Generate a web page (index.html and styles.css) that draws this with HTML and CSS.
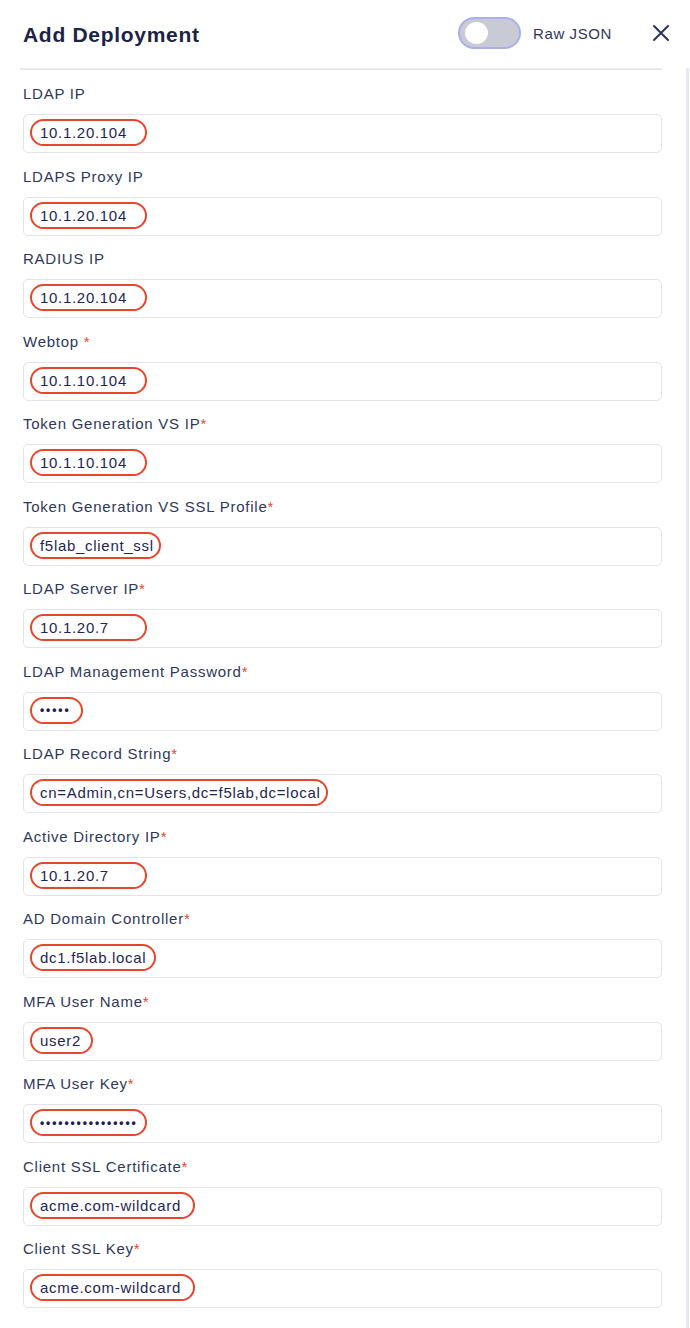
FILE: index.html
```html
<!DOCTYPE html>
<html lang="en">
<head>
<meta charset="utf-8">
<title>Add Deployment</title>
<link rel="stylesheet" href="styles.css">
</head>
<body>
<div class="modal">
  <header class="header">
    <h1 class="title">Add Deployment</h1>
    <div class="toggle"><span class="knob"></span></div>
    <span class="toggle-label">Raw JSON</span>
    <svg class="close" width="18" height="18" viewBox="0 0 18 18" aria-label="Close">
      <path d="M2 2 L16 16 M16 2 L2 16" stroke="#2a3358" stroke-width="2" stroke-linecap="round" fill="none"/>
    </svg>
  </header>
  <div class="body">
    <div class="form">
      <div class="divider"></div>
      <div class="fields">
        <div class="field">
          <label class="label">LDAP IP</label>
          <div class="input"><span class="value">10.1.20.104</span><span class="oval w-ip"></span></div>
        </div>
        <div class="field">
          <label class="label">LDAPS Proxy IP</label>
          <div class="input"><span class="value">10.1.20.104</span><span class="oval w-ip"></span></div>
        </div>
        <div class="field">
          <label class="label">RADIUS IP</label>
          <div class="input"><span class="value">10.1.20.104</span><span class="oval w-ip"></span></div>
        </div>
        <div class="field">
          <label class="label">Webtop <span class="req">*</span></label>
          <div class="input"><span class="value">10.1.10.104</span><span class="oval w-ip"></span></div>
        </div>
        <div class="field">
          <label class="label">Token Generation VS IP<span class="req">*</span></label>
          <div class="input"><span class="value">10.1.10.104</span><span class="oval w-ip"></span></div>
        </div>
        <div class="field">
          <label class="label">Token Generation VS SSL Profile<span class="req">*</span></label>
          <div class="input"><span class="value">f5lab_client_ssl</span><span class="oval w-ssl"></span></div>
        </div>
        <div class="field">
          <label class="label">LDAP Server IP<span class="req">*</span></label>
          <div class="input"><span class="value">10.1.20.7</span><span class="oval w-ip"></span></div>
        </div>
        <div class="field">
          <label class="label">LDAP Management Password<span class="req">*</span></label>
          <div class="input"><span class="value dots">•••••</span><span class="oval w-pw"></span></div>
        </div>
        <div class="field">
          <label class="label">LDAP Record String<span class="req">*</span></label>
          <div class="input"><span class="value">cn=Admin,cn=Users,dc=f5lab,dc=local</span><span class="oval w-cn"></span></div>
        </div>
        <div class="field">
          <label class="label">Active Directory IP<span class="req">*</span></label>
          <div class="input"><span class="value">10.1.20.7</span><span class="oval w-ip"></span></div>
        </div>
        <div class="field">
          <label class="label">AD Domain Controller<span class="req">*</span></label>
          <div class="input"><span class="value">dc1.f5lab.local</span><span class="oval w-dc"></span></div>
        </div>
        <div class="field">
          <label class="label">MFA User Name<span class="req">*</span></label>
          <div class="input"><span class="value">user2</span><span class="oval w-user"></span></div>
        </div>
        <div class="field">
          <label class="label">MFA User Key<span class="req">*</span></label>
          <div class="input"><span class="value dots">••••••••••••••••</span><span class="oval w-ip"></span></div>
        </div>
        <div class="field">
          <label class="label">Client SSL Certificate<span class="req">*</span></label>
          <div class="input"><span class="value">acme.com-wildcard</span><span class="oval w-acme"></span></div>
        </div>
        <div class="field">
          <label class="label">Client SSL Key<span class="req">*</span></label>
          <div class="input"><span class="value">acme.com-wildcard</span><span class="oval w-acme"></span></div>
        </div>
      </div>
    </div>
    <div class="scrollbar"></div>
  </div>
</div>
</body>
</html>
```

FILE: styles.css
```css
* { box-sizing: border-box; }

html, body {
  margin: 0;
  padding: 0;
  background: #ffffff;
}

body {
  font-family: "Liberation Sans", Arial, sans-serif;
  color: #2f385a;
}

.modal {
  width: 690px;
  height: 1328px;
  overflow: hidden;
  display: flex;
  flex-direction: column;
}

.header {
  height: 68px;
  display: flex;
  align-items: center;
  padding: 0 20px 0 23px;
}

.title {
  flex: 1;
  margin: 0;
  font-size: 21px;
  font-weight: 700;
  letter-spacing: 0.7px;
  color: #1b2347;
  position: relative;
  top: 1px;
}

.toggle {
  position: relative;
  width: 63px;
  height: 32px;
  border-radius: 16px;
  background: #c8cad5;
  border: 2px solid #a9b0e8;
  margin-top: -2px;
}

.knob {
  position: absolute;
  left: 5px;
  top: 3px;
  width: 23px;
  height: 22px;
  border-radius: 50%;
  background: #ffffff;
}

.toggle-label {
  margin-left: 12px;
  font-size: 15px;
  letter-spacing: 0.6px;
  color: #2f385a;
  margin-right: 40px;
  position: relative;
  top: -1px;
}

.close {
  display: block;
  margin-top: -2px;
}

.body {
  flex: 1;
  display: flex;
}

.form {
  flex: 1;
  padding: 0 24px 0 20px;
}

.divider {
  height: 2px;
  background: #e9e9f0;
}

.fields {
  display: flex;
  flex-direction: column;
  gap: 14.5px;
  padding: 15px 0 0 3px;
}

.field {
  display: flex;
  flex-direction: column;
  gap: 11px;
}

.label {
  font-size: 15px;
  line-height: 18px;
  letter-spacing: 0.75px;
  color: #2f385a;
}

.req {
  color: #e5472f;
  letter-spacing: 0;
}

.input {
  position: relative;
  height: 39px;
  border: 1px solid #e3e3eb;
  border-radius: 5px;
  background: #ffffff;
  display: flex;
  align-items: center;
  padding-left: 16px;
}

.value {
  font-size: 15px;
  letter-spacing: 0.7px;
  color: #1e2652;
  position: relative;
  top: -1px;
  white-space: nowrap;
}

.value.dots {
  font-size: 12px;
  letter-spacing: 1.9px;
  font-weight: 700;
  color: #1a2150;
}

.oval {
  position: absolute;
  left: 6px;
  top: 4px;
  height: 27px;
  border: 2.5px solid #e5462c;
  border-radius: 14px;
  pointer-events: none;
}

.w-ip { width: 117px; }
.w-ssl { width: 131px; }
.w-pw { width: 53px; }
.w-cn { width: 298px; }
.w-dc { width: 126px; }
.w-user { width: 63px; }
.w-acme { width: 165px; }

.scrollbar {
  width: 3px;
  margin-right: 1px;
  background: #e8e8f3;
}
```
